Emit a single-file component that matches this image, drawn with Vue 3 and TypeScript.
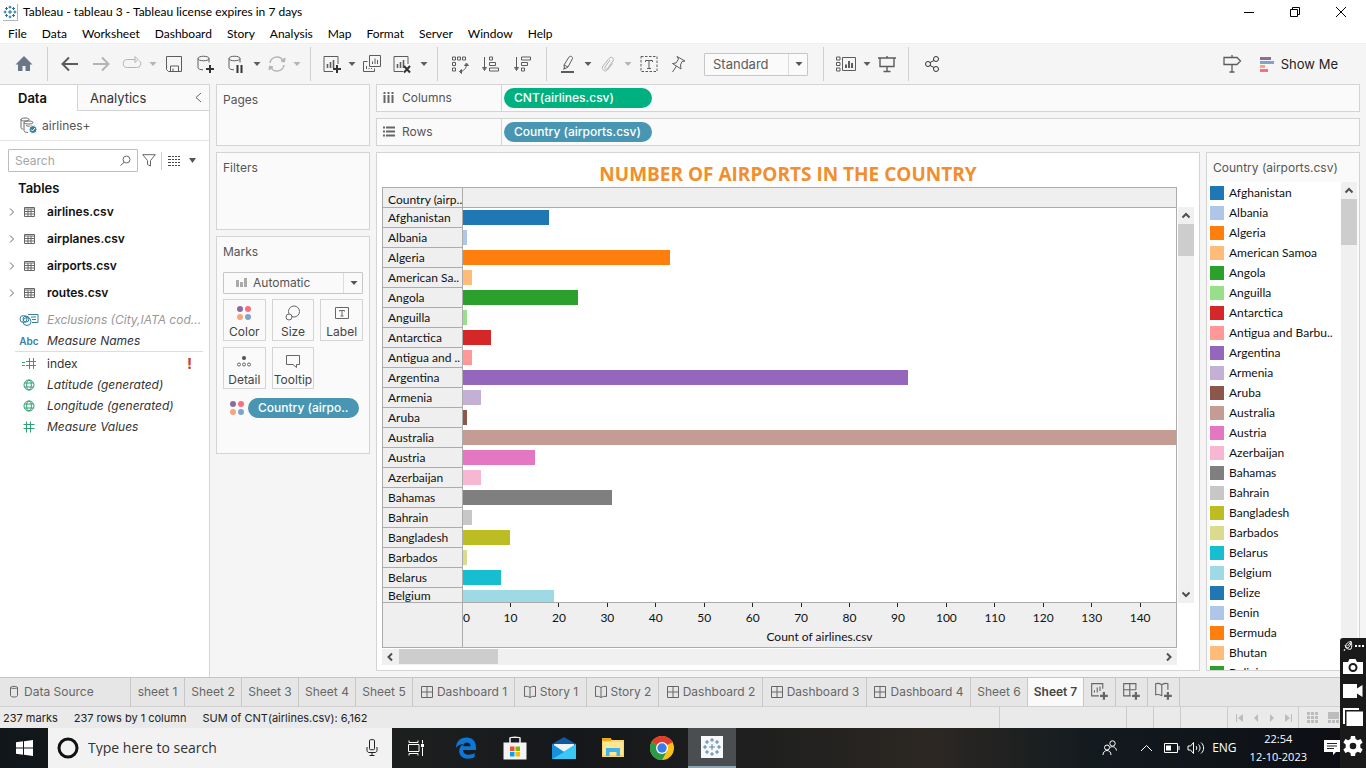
<script setup lang="ts">
import { ref } from 'vue'

interface Country { name: string; short?: string; value: number }
interface Tool { icon: string; label: string; size: string; dim?: boolean; sep?: boolean }

const palette = [
  '#1f77b4', '#aec7e8', '#ff7f0e', '#ffbb78', '#2ca02c', '#98df8a', '#d62728', '#ff9896', '#9467bd', '#c5b0d5',
  '#8c564b', '#c49c94', '#e377c2', '#f7b6d2', '#7f7f7f', '#c7c7c7', '#bcbd22', '#dbdb8d', '#17becf', '#9edae5',
]
const domain = 147.2

const countries: Country[] = [
  { name: 'Afghanistan', value: 18 },
  { name: 'Albania', value: 1 },
  { name: 'Algeria', value: 43 },
  { name: 'American Samoa', short: 'American Sa..', value: 2 },
  { name: 'Angola', value: 24 },
  { name: 'Anguilla', value: 1 },
  { name: 'Antarctica', value: 6 },
  { name: 'Antigua and Barbu..', short: 'Antigua and ..', value: 2 },
  { name: 'Argentina', value: 92 },
  { name: 'Armenia', value: 4 },
  { name: 'Aruba', value: 1 },
  { name: 'Australia', value: 191 },
  { name: 'Austria', value: 15 },
  { name: 'Azerbaijan', value: 4 },
  { name: 'Bahamas', value: 31 },
  { name: 'Bahrain', value: 2 },
  { name: 'Bangladesh', value: 10 },
  { name: 'Barbados', value: 1 },
  { name: 'Belarus', value: 8 },
  { name: 'Belgium', value: 19 },
]
const legend = [...countries.map((c) => c.name), 'Belize', 'Benin', 'Bermuda', 'Bhutan', 'Bolivia']
const ticks = Array.from({ length: 14 }, (_, i) => (i + 1) * 10)
const barWidth = (v: number) => `calc(${Math.min(101, (v / domain) * 100)}% - 1px)`

const menus = ['File', 'Data', 'Worksheet', 'Dashboard', 'Story', 'Analysis', 'Map', 'Format', 'Server', 'Window', 'Help']
const query = ref('')
const fit = ref('Standard')
const markType = ref('Automatic')

const db = '<path d="M3 4.5c0-3 11-3 11 0s-11 3-11 0v9c0 1.500 2 2.200 5 2.300M14 4.500v4"/>'
const sheet = '<path d="M16 10V2.500H2v15h9"/><path d="M5.500 14v-4M8.500 14V8M11.500 14V6" stroke-width="1.600"/>'
const plus = '<path d="M15 11v8M11 15h8" stroke="#333" stroke-width="2"/>'
const icons: Record<string, string> = {
  home: '<path d="M10 2L1.500 10.500H4V17h4.500v-5h3v5H16v-6.500h2.500z" fill="#6b7786" stroke="none"/>',
  back: '<path d="M18 10H3M9 3.500L2.500 10L9 16.500" stroke-width="2"/>',
  forward: '<path d="M2 10h15M11 3.500l6.500 6.500L11 16.500" stroke-width="2"/>',
  redo: '<path d="M13 5.500H5.500a4 3.800 0 0 0 0 8h9a4 3.800 0 0 0 2.500-7M13 2.500v6l3-3z"/>',
  save: '<path d="M2.500 2.500h15v15h-13l-2-2zM6.500 17.500v-5.500h8v5.500M9 14.500v3" />',
  dbAdd: db + plus,
  dbPause: db + '<path d="M11.500 11v8M15.500 11v8" stroke="#333" stroke-width="2"/>',
  refresh: '<path d="M3 9a7 7 0 0 1 13-2.500M17 11a7 7 0 0 1-13 2.500" stroke-width="1.500"/><path d="M17.500 8l.5-4-4 3zM2.500 12L2 16l4-3z" fill="currentColor"/>',
  newSheet: sheet + plus,
  duplicate: '<path d="M7.500 1.500h11v11h-11zM5.500 7.500h-4v10h11v-3"/><path d="M10.500 10V7.500M13 10V4.500M15.500 10V6M4.500 15v-3M7 15v-1M9.500 15v-1"/>',
  clear: sheet + '<path d="M12 12l6 6.500M18 12l-6 6.500" stroke="#333" stroke-width="2"/>',
  swap: '<path d="M2.500 3h3v3h-3zM7.500 3h3v3h-3zM12.500 3h3v3h-3zM2.500 8.500h3v3h-3zM2.500 14h3v3h-3zM9.500 17.500c4 0 7-3 7-7.500M9.500 17.500l2-2v4zM16.500 9l-2 2.500h4z"/>',
  asc: '<path d="M3.500 3v13M1.500 13.500l2 3 2-3zM8.500 3h3v3h-3zM8.500 8.500h6v3h-6zM8.500 14h9v3h-9z"/>',
  desc: '<path d="M3.500 3v13M1.500 13.500l2 3 2-3zM8.500 3h9v3h-9zM8.500 8.500h6v3h-6zM8.500 14h3v3h-3z"/>',
  highlight: '<path d="M6 11l5-8c1-1.500 4-.5 3.500 1.500L10 13l-3.500 2zM6 11l4 2M5.500 15.500l1-2"/><path d="M3 18h13" stroke-width="2"/>',
  clip: '<path d="M12 6l-5 7c-1 2 1 3 2.500 1.500L15 7c1.500-3-1.500-5-4-2.500L5 12c-2 3.500 1.500 6.500 4.500 4l5-6.500"/>',
  text: '<path d="M2 2.500h16v15H2z" stroke-dasharray="2.500 1.500"/><path d="M6.500 8V6.500h7V8M10 6.500v8M8 14.500h4"/>',
  pin: '<path d="M9 2.500l8 4.500-3 .500-1.500 3.500.5 4-8.500-5.500 3.500-.5 2.500-4zM8.500 12l-4 6"/>',
  cards: '<path d="M.5 3h3.500v3H.5zM.5 8.500h3.500v3H.5zM.5 14h3.500v3H.5zM6.500 3.500h13v13h-13z"/><path d="M10 14v-3.500M13 14V7M16 14V9" stroke-width="2"/>',
  present: '<path d="M1 4h18M3 4v8.500h14V4M10 2v2M10 12.500v5M6.500 17.500h7" stroke-width="1.400"/>',
  share: '<circle cx="6" cy="10" r="2.500"/><circle cx="14" cy="5" r="2.500"/><circle cx="14" cy="15" r="2.500"/><path d="M8 8.500l4-2M8 11.500l4 2"/>',
  guide: '<path d="M2 3.500h13l3.500 3.500-3.500 3.500H2zM10 1v2.500M10 10.500V18M7.500 18h5" stroke-width="1.300"/>',
  caret: '<path d="M6.500 8h7L10 12z" fill="currentColor" stroke="none"/>',
  grid: '<path d="M4.500 4.500h11v11h-11zM10 4.500v11M4.500 10h11"/>',
  book: '<path d="M4.500 4.500c2-.5 4 0 5.500 1 1.500-1 3.500-1.500 5.500-1v10c-2-.5-4 0-5.500 1-1.500-1-3.500-1.500-5.500-1zM10 5.500v10"/>',
  cylinder: '<path d="M6.500 5.500c0-1.500 7-1.500 7 0v8c0 2-7 2-7 0zM6.500 5.500c0 1.200 7 1.200 7 0"/>',
  tabSheet: '<path d="M14.500 9V4.500h-10v11H11M7 12.500v-2M9.500 12.500V8M12 11V7"/><path d="M15.500 12v7M12 15.500h7" stroke-width="2"/>',
  tabGrid: '<path d="M15.500 10V4.500h-11v11H11M10 4.500v11M4.500 10h11"/><path d="M15.500 12v7M12 15.500h7" stroke-width="2"/>',
  tabBook: '<path d="M10 5.500c1.500-1 3.500-1.500 5.500-1V10M10 15.500c-1.500-1-3.500-1.500-5.500-1v-10c2-.5 4 0 5.500 1v10"/><path d="M15.500 12v7M12 15.500h7" stroke-width="2"/>',
}

const tools: Tool[] = [
  { icon: 'home', label: 'Start page', size: 'w32', sep: true },
  { icon: 'back', label: 'Undo', size: 'w30' },
  { icon: 'forward', label: 'Redo', size: 'w32', dim: true },
  { icon: 'redo', label: 'Replay', size: 'w30', dim: true },
  { icon: 'caret', label: 'Replay options', size: 'w12', dim: true },
  { icon: 'save', label: 'Save', size: 'w30' },
  { icon: 'dbAdd', label: 'New data source', size: 'w32' },
  { icon: 'dbPause', label: 'Pause updates', size: 'w30' },
  { icon: 'caret', label: 'Pause options', size: 'w12' },
  { icon: 'refresh', label: 'Run update', size: 'w28', dim: true },
  { icon: 'caret', label: 'Update options', size: 'w12', dim: true, sep: true },
  { icon: 'newSheet', label: 'New worksheet', size: 'w28' },
  { icon: 'caret', label: 'New options', size: 'w12' },
  { icon: 'duplicate', label: 'Duplicate', size: 'w28' },
  { icon: 'clear', label: 'Clear sheet', size: 'w32' },
  { icon: 'caret', label: 'Clear options', size: 'w12', sep: true },
  { icon: 'swap', label: 'Swap rows and columns', size: 'w30' },
  { icon: 'asc', label: 'Sort ascending', size: 'w32' },
  { icon: 'desc', label: 'Sort descending', size: 'w32', sep: true },
  { icon: 'highlight', label: 'Highlight', size: 'w28' },
  { icon: 'caret', label: 'Highlight options', size: 'w12' },
  { icon: 'clip', label: 'Group members', size: 'w28', dim: true },
  { icon: 'caret', label: 'Group options', size: 'w12', dim: true },
  { icon: 'text', label: 'Show mark labels', size: 'w30' },
  { icon: 'pin', label: 'Fix axes', size: 'w28' },
]

const tables = ['airlines.csv', 'airplanes.csv', 'airports.csv', 'routes.csv']

const sheets = [
  { name: 'sheet 1', kind: 'sheet first' },
  { name: 'Sheet 2', kind: 'sheet' },
  { name: 'Sheet 3', kind: 'sheet' },
  { name: 'Sheet 4', kind: 'sheet' },
  { name: 'Sheet 5', kind: 'sheet' },
  { name: 'Dashboard 1', kind: 'dash narrow', icon: 'grid' },
  { name: 'Story 1', kind: 'story', icon: 'book' },
  { name: 'Story 2', kind: 'story', icon: 'book' },
  { name: 'Dashboard 2', kind: 'dash', icon: 'grid' },
  { name: 'Dashboard 3', kind: 'dash', icon: 'grid' },
  { name: 'Dashboard 4', kind: 'dash', icon: 'grid' },
  { name: 'Sheet 6', kind: 'sheet' },
  { name: 'Sheet 7', kind: 'sheet active' },
]
const crosses = [[10, 3], [15, 5], [17, 10], [15, 15], [10, 17], [5, 15], [3, 10], [5, 5]]
const cross = (x: number, y: number, r: number) => `M${x - r} ${y}h${2 * r}M${x} ${y - r}v${2 * r}`
const logo = cross(10, 10, 3) + crosses.map(([x, y]) => cross(x, y, 2)).join('')
</script>

<template>
  <div class="desktop">
    <header class="titlebar">
      <svg class="app-logo" viewBox="0 0 20 20"><path :d="logo" /></svg>
      <h1>Tableau - tableau 3 - Tableau license expires in 7 days</h1>
      <div class="win-buttons">
        <button aria-label="Minimize"><svg width="12" height="12"><path d="M1 6.500h10" /></svg></button>
        <button aria-label="Restore"><svg width="12" height="12"><path d="M1.500 3.500h7v7h-7zM3.500 3.500v-2h7v7h-2" /></svg></button>
        <button aria-label="Close"><svg width="12" height="12"><path d="M1 1l10 10M11 1L1 11" /></svg></button>
      </div>
    </header>
    <nav class="menubar">
      <button v-for="m in menus" :key="m">{{ m }}</button>
    </nav>

    <div class="toolbar">
      <template v-for="t in tools" :key="t.label">
        <button :class="[t.size, { dim: t.dim }]" :aria-label="t.label">
          <svg class="ico" viewBox="0 0 20 20" v-html="icons[t.icon]"></svg>
        </button>
        <span v-if="t.sep" class="sep"></span>
      </template>
      <label class="combo fit">
        <select v-model="fit" aria-label="Fit"><option>Standard</option><option>Fit Width</option></select>
        <span class="arrow"><svg class="ico" viewBox="0 0 20 20" v-html="icons.caret"></svg></span>
      </label>
      <span class="sep"></span>
      <button class="w30" aria-label="Show cards"><svg class="ico" viewBox="0 0 20 20" v-html="icons.cards"></svg></button>
      <button class="w12" aria-label="Card options"><svg class="ico" viewBox="0 0 20 20" v-html="icons.caret"></svg></button>
      <button class="w28" aria-label="Presentation mode"><svg class="ico" viewBox="0 0 20 20" v-html="icons.present"></svg></button>
      <span class="sep"></span>
      <button class="w32" aria-label="Share"><svg class="ico strong" viewBox="0 0 20 20" v-html="icons.share"></svg></button>
      <span class="grow"></span>
      <button class="w32" aria-label="Guide"><svg class="ico" viewBox="0 0 20 20" v-html="icons.guide"></svg></button>
      <button class="show-me">
        <svg width="14" height="15" viewBox="0 0 14 15"><path d="M0 0h11v3H0z" fill="#8c6d98" /><path d="M0 4h14v3H0z" fill="#7fa3cd" /><path d="M0 8h5v3H0z" fill="#f5a77a" /><path d="M0 12h8v3H0z" fill="#fc6d80" /></svg>
        Show Me
      </button>
    </div>

    <main class="workspace">
      <aside class="data-pane">
        <div class="pane-tabs" role="tablist">
          <button role="tab" aria-selected="true" class="on">Data</button>
          <button role="tab" aria-selected="false">Analytics</button>
          <button class="collapse" aria-label="Collapse"><svg width="7" height="11"><path d="M6 1L1 5.500L6 10" /></svg></button>
        </div>
        <div class="source">
          <svg width="17" height="17" viewBox="0 0 17 17">
            <path d="M1 2.500c0-2 8-2 8 0s-8 2-8 0v8c0 1 1 1.500 2 1.700M4 5.500c0-2 9-2 9 0s-9 2-9 0v8c0 1.500 2 2 4 2M6 8.500c1 .8 4 1 6 .3" />
            <circle cx="13" cy="12.500" r="4" class="badge" /><path d="M11 12.500l1.500 1.500 2.500-3" class="check" />
          </svg>
          airlines+
        </div>
        <div class="search-row">
          <label class="search">
            <input v-model="query" type="text" placeholder="Search" aria-label="Search fields" />
            <svg width="11" height="11"><circle cx="6.500" cy="4.500" r="3.500" /><path d="M4 7.500L.5 10.500" /></svg>
          </label>
          <button aria-label="Filter fields"><svg width="14" height="13"><path d="M.7.700h12.600L8.500 6.500v5.500l-3-1.500v-4z" /></svg></button>
          <span class="vline"></span>
          <button class="list" aria-label="View"><svg width="12" height="10"><path d="M0 .5h3M4 .5h2M7 .5h2M10 .5h2M0 3.500h3M4 3.500h2M7 3.500h2M10 3.500h2M0 6.500h3M4 6.500h2M7 6.500h2M10 6.500h2M0 9.500h3M4 9.500h2M7 9.500h2M10 9.500h2" class="dark" /></svg></button>
          <button class="more" aria-label="More"><svg width="7" height="5"><path d="M0 0h7L3.500 5z" class="solid" /></svg></button>
        </div>
        <h2>Tables</h2>
        <ul class="tables">
          <li v-for="t in tables" :key="t">
            <svg class="chev" width="6" height="8"><path d="M1 .5L4.500 4L1 7.500" /></svg>
            <svg class="tbl" width="11" height="10"><path d="M.5.5h10v9H.5zM.5 2h10M.5 4.500h10M.5 7h10M4 2v7.500M7 2v7.500" /></svg>
            {{ t }}
          </li>
        </ul>
        <ul class="fields">
          <li class="off">
            <svg width="20" height="14" class="blue"><circle cx="4.500" cy="6" r="3.500" /><circle cx="8" cy="8.500" r="4" /><circle cx="7" cy="6" r="3" /><path d="M9 1.500h10v8h-6M12 4h5M13 6.500h4" /></svg>
            <i>Exclusions (City,IATA cod...</i>
          </li>
          <li><b class="abc">Abc</b><i>Measure Names</i></li>
        </ul>
        <ul class="fields measures">
          <li>
            <svg width="14" height="11" class="green"><path d="M0 4.500h3M0 7.500h3M4 3.500h10M4 7.500h10M7.500 0v11M11.500 0v11" /></svg>
            <span>index</span><b class="warn">!</b>
          </li>
          <li v-for="g in ['Latitude (generated)', 'Longitude (generated)']" :key="g">
            <svg width="12" height="12" class="green"><circle cx="6" cy="6" r="5" /><ellipse cx="6" cy="6" rx="2.300" ry="5" /><path d="M1.500 4h9M1.500 8h9" /></svg>
            <i>{{ g }}</i>
          </li>
          <li>
            <svg width="12" height="12" class="green"><path d="M.5 3.500h11M.5 7.500h11M3.500 .5v11M7.500 .5v11" /></svg>
            <i>Measure Values</i>
          </li>
        </ul>
      </aside>

      <div class="cards">
        <section class="card pages"><h3>Pages</h3></section>
        <section class="card filters"><h3>Filters</h3></section>
        <section class="card marks">
          <h3>Marks</h3>
          <label class="combo mark-type">
            <svg width="11" height="10" class="bars"><path d="M1.500 2v7M5.500 4v5M9.500 0v9" /></svg>
            <select v-model="markType" aria-label="Mark type"><option>Automatic</option><option>Bar</option></select>
            <span class="arrow"><svg class="ico" viewBox="0 0 20 20" v-html="icons.caret"></svg></span>
          </label>
          <div class="mark-grid">
            <button>
              <svg width="16" height="16" class="dots"><circle cx="4" cy="4" r="3" fill="#8c6d98" /><circle cx="12" cy="4" r="3" fill="#fc6d80" /><circle cx="4" cy="12" r="3" fill="#f5a77a" /><circle cx="12" cy="12" r="3" fill="#7fa3cd" /></svg>Color
            </button>
            <button><svg width="16" height="16"><circle cx="9" cy="6.500" r="5.500" /><circle cx="4" cy="12" r="3" class="cover" /></svg>Size</button>
            <button><svg width="16" height="16"><path d="M1.500 2.500h13v11h-13zM5.500 6.500v-1h5v1M8 5.500v5.500M6.500 11h3" /></svg>Label</button>
            <button><svg width="16" height="16"><circle cx="8" cy="5" r="1.700" class="fill" /><circle cx="3" cy="11.500" r="1.500" /><circle cx="8" cy="11.500" r="1.500" /><circle cx="13" cy="11.500" r="1.500" /></svg>Detail</button>
            <button><svg width="16" height="16"><path d="M1.500 2.500h13v9h-3v3l-3.500-3H1.500z" /></svg>Tooltip</button>
          </div>
          <div class="mark-pill">
            <svg width="16" height="16"><circle cx="4" cy="4" r="3" fill="#8c6d98" /><circle cx="12" cy="4" r="3" fill="#fc6d80" /><circle cx="4" cy="12" r="3" fill="#f5a77a" /><circle cx="12" cy="12" r="3" fill="#7fa3cd" /></svg>
            <button class="pill dim-pill">Country (airpo..</button>
          </div>
        </section>
      </div>

      <div class="canvas">
        <section class="shelf">
          <h3><svg width="12" height="12"><path d="M1.500 0v2M5.500 0v2M9.500 0v2M1.500 3v8M5.500 3v8M9.500 3v8" /></svg>Columns</h3>
          <button class="pill measure">CNT(airlines.csv)</button>
        </section>
        <section class="shelf">
          <h3><svg width="12" height="12"><path d="M0 1.500h2M0 5.500h2M0 9.500h2M3 1.500h9M3 5.500h9M3 9.500h9" /></svg>Rows</h3>
          <button class="pill dim-pill">Country (airports.csv)</button>
        </section>
        <div class="view-row">
          <section class="worksheet">
            <h2>NUMBER OF AIRPORTS IN THE COUNTRY</h2>
            <div class="viz">
              <div class="pane">
                <div class="row head"><span class="name">Country (airp..</span></div>
                <ul class="rows">
                  <li v-for="(c, i) in countries" :key="c.name" class="row">
                    <span class="name">{{ c.short || c.name }}</span>
                    <span class="track"><span class="bar" :style="{ width: barWidth(c.value), background: palette[i] }"></span></span>
                  </li>
                </ul>
                <div class="axis">
                  <span class="corner"></span>
                  <div class="scale">
                    <div class="ticks">
                      <span class="zero">0</span>
                      <span v-for="t in ticks" :key="t" class="tick">{{ t }}</span>
                      <span class="rest"></span>
                    </div>
                    <p>Count of airlines.csv</p>
                  </div>
                </div>
              </div>
              <div class="scroll v">
                <svg width="16" height="17"><path d="M4.500 10.500L8 7l3.500 3.500" /></svg>
                <span class="thumb"></span><span class="grow"></span>
                <svg width="16" height="17"><path d="M4.500 6.500L8 10l3.500-3.500" /></svg>
              </div>
            </div>
            <div class="scroll h">
              <svg width="17" height="16"><path d="M10 4.500L6.500 8L10 11.500" /></svg>
              <span class="thumb"></span><span class="grow"></span>
              <svg width="17" height="16"><path d="M7 4.500L10.500 8L7 11.500" /></svg>
            </div>
          </section>
          <section class="legend">
            <h3>Country (airports.csv)</h3>
            <div class="legend-body">
              <ul>
                <li v-for="(n, i) in legend" :key="n">
                  <span class="swatch" :style="{ background: palette[i % palette.length] }"></span>{{ n }}
                </li>
              </ul>
              <div class="scroll v">
                <svg width="16" height="17"><path d="M4.500 10.500L8 7l3.500 3.500" /></svg>
                <span class="thumb"></span>
              </div>
            </div>
          </section>
        </div>
      </div>
    </main>

    <nav class="sheet-tabs">
      <button class="ds"><svg class="ico" viewBox="0 0 20 20" v-html="icons.cylinder"></svg>Data Source</button>
      <button v-for="s in sheets" :key="s.name" :class="s.kind">
        <svg v-if="s.icon" class="tab-ico" viewBox="3 3 14 14" v-html="icons[s.icon]"></svg>{{ s.name }}
      </button>
      <button class="add" aria-label="New worksheet"><svg class="ico" viewBox="3 3 18 18" v-html="icons.tabSheet"></svg></button>
      <button class="add" aria-label="New dashboard"><svg class="ico" viewBox="3 3 18 18" v-html="icons.tabGrid"></svg></button>
      <button class="add" aria-label="New story"><svg class="ico" viewBox="3 3 18 18" v-html="icons.tabBook"></svg></button>
    </nav>

    <footer class="status">
      <span>237 marks</span><span>237 rows by 1 column</span><span>SUM of CNT(airlines.csv): 6,162</span>
      <span class="grow"></span>
      <span class="cell wide"></span><span class="cell"></span><span class="cell"></span><span class="cell mid"></span>
      <span class="cell nav">
        <button aria-label="First"><svg width="8" height="8"><path d="M0 0h1v8H0zM7 0v8L2 4z" /></svg></button>
        <button aria-label="Previous"><svg width="8" height="8"><path d="M6 0v8L2 4z" /></svg></button>
        <button aria-label="Next"><svg width="8" height="8"><path d="M2 0v8l4-4z" /></svg></button>
        <button aria-label="Last"><svg width="8" height="8"><path d="M7 0h1v8H7zM1 0v8l5-4z" /></svg></button>
      </span>
      <span class="cell views">
        <button aria-label="Show sheet sorter"><svg width="11" height="11"><path d="M0 0h3v3H0zM4 0h3v3H4zM8 0h3v3H8zM0 4h3v3H0zM4 4h3v3H4zM8 4h3v3H8zM0 8h3v3H0zM4 8h3v3H4zM8 8h3v3H8z" /></svg></button>
        <button aria-label="Show filmstrip"><svg width="11" height="11"><path d="M0 0h11v7H0zM0 8h3v3H0zM4 8h3v3H4zM8 8h3v3H8z" /></svg></button>
      </span>
    </footer>

    <div class="taskbar">
      <button class="start" aria-label="Start">
        <svg width="17" height="16"><path d="M0 2.300L7 1.300V7.500H0zM8 1.200L17 0v7.500H8zM0 8.500h7v6.200l-7-1zM8 8.500h9V16l-9-1.200z" fill="#fff" /></svg>
      </button>
      <label class="cortana">
        <svg width="22" height="22"><circle cx="11" cy="11" r="9" fill="none" stroke="#111" stroke-width="3" /></svg>
        <input type="text" placeholder="Type here to search" aria-label="Windows search" />
        <svg width="12" height="18" class="mic"><rect x="3.500" y=".7" width="5" height="10" rx="1" /><path d="M1 8v3.500c0 1 1 2 2 2h6c1 0 2-1 2-2V8M6 13.500V17M3.500 16.500h5" /></svg>
      </label>
      <button class="app" aria-label="Task view">
        <svg width="17" height="16" class="line"><path d="M1 .5v2h9v-2M.5 4.500h10.500v7H.5zM1 15.500v-2h9v2M14.500 0v3.500M14.500 7.500V16" /><path d="M13 4h3v3h-3z" fill="#fff" stroke="none" /></svg>
      </button>
      <button class="app" aria-label="Edge">
        <svg width="22" height="22" viewBox="0 0 22 22"><path d="M1 11C1 4.500 5.500.500 11.500.500c6 0 9.500 4 9.500 9.500v3H8c.2 3.500 3 4.700 6 4.700 2.300 0 4.300-.7 5.700-1.600v4c-2 1.100-4.400 1.600-7 1.600-5 0-8.500-3-8.500-7.700 0-3.200 1.800-5.700 4.600-7C5.500 7 2.500 8.500 1 11zM8.200 9.300h7.300c0-2.600-1.300-3.800-3.500-3.800S8.500 7 8.200 9.300z" fill="#0b78d7" /></svg>
      </button>
      <button class="app" aria-label="Store">
        <svg width="24" height="24"><path d="M7 8V2c0-1 10-1 10 0v6" fill="none" stroke="#f3f3f3" stroke-width="1.500" /><path d="M.5 6.500h23v17H.5z" fill="#f3f3f3" /><path d="M7 10.500h4.500V15H7z" fill="#f25022" /><path d="M12.500 10.500H17V15h-4.500z" fill="#7fba00" /><path d="M7 16h4.500v4.500H7z" fill="#00a4ef" /><path d="M12.500 16H17v4.500h-4.500z" fill="#ffb900" /></svg>
      </button>
      <button class="app" aria-label="Mail">
        <svg width="24" height="22"><path d="M0 7L12 0l12 7v15H0z" fill="#0c59a4" /><path d="M2 7h20v9H2z" fill="#f2f2f2" /><path d="M0 7l12 8L24 7v15H0z" fill="#2cb5ed" /><path d="M0 22L24 7v15z" fill="#38c8f5" /><path d="M0 7l12 8L0 22z" fill="#1591df" /></svg>
      </button>
      <button class="app" aria-label="File explorer">
        <svg width="22" height="20"><path d="M0 1h9l1 1h12v17H0z" fill="#f6d672" /><path d="M0 0h9v3H0z" fill="#e8ab21" /><path d="M1 4h20v13H1z" fill="#fde694" /><path d="M4 18v-8h14v8h-3.500v-4h-7v4z" fill="#3fb3ea" /></svg>
      </button>
      <button class="app" aria-label="Chrome">
        <svg width="24" height="24"><circle cx="12" cy="12" r="12" fill="#fbc116" /><path d="M12 12L1.600 6A12 12 0 0 1 22.400 6z" fill="#e33b2e" /><path d="M1.600 6A12 12 0 0 0 12 24l5.200-9z" fill="#2c9b48" /><path d="M12 6h10.400" stroke="#e33b2e" stroke-width="1" /><circle cx="12" cy="12" r="6" fill="#fff" /><circle cx="12" cy="12" r="4.700" fill="#3a7cec" /></svg>
      </button>
      <button class="app current" aria-label="Tableau">
        <svg width="22" height="22" viewBox="0 0 22 22"><path d="M0 0h22v22H0z" fill="#f8f8f8" /><path :d="logo" transform="translate(1 1)" stroke="#4f86a8" fill="none" /></svg>
      </button>
      <span class="grow"></span>
      <div class="tray">
        <button aria-label="People"><svg width="16" height="16" class="line"><circle cx="10.500" cy="3.500" r="2.700" /><circle cx="5" cy="7.500" r="2.500" /><path d="M7.500 8c2-2.500 6.500-1.500 7 2.500M1 15c0-6 8-6 8 0" /></svg></button>
        <button class="up" aria-label="Hidden icons"><svg width="13" height="8" class="line"><path d="M1 7l5.500-5.500L12 7" /></svg></button>
        <button aria-label="Battery"><svg width="16" height="10" class="line"><path d="M.5.5h13v9H.5zM15 3v4" /><path d="M2 2.500h5v5H2z" fill="#fff" stroke="none" /></svg></button>
        <button aria-label="Volume"><svg width="18" height="14" class="line"><path d="M1 5h2.500l3-3.500v11L3.500 9H1zM9 5c1 1 1 3 0 4M11.500 3.500c2 2 2 5 0 7M14 1.500c3.500 3 3.500 8 0 11" /></svg></button>
        <button class="lang">ENG</button>
        <button class="clock"><span>22:54</span><span>12-10-2023</span></button>
        <button class="note" aria-label="Notifications"><svg width="18" height="18"><path d="M0 1h16v12h-4l-3 3v-3H0z" fill="#fff" /><path d="M3 4.500h10M3 7h10M3 9.500h7" stroke="#222" /></svg></button>
      </div>
    </div>

    <div class="recorder">
      <svg width="22" height="12"><path d="M3 9l-1 2M4 8c-1-3 1-6 5-6.500C9 5 7 8.500 4 8zM3 5c1 3 3 5 6 4 1-2 1-5 0-7.500M5.500 6L8 3" class="outline" /><path d="M13 5h2v2h-2zM16.500 5h2v2h-2zM20 5h2v2h-2z" /></svg>
      <button aria-label="Screenshot"><svg width="20" height="16"><path d="M0 4h5l1.500-3h6L14 4h6v12H0z" /><circle cx="10" cy="9.500" r="3.500" class="ring" /></svg></button>
      <button aria-label="Record video"><svg width="20" height="14"><path d="M0 0h14v4.500L19.500 1v12L14 9.500V14H0z" /></svg></button>
      <button aria-label="Windows"><svg width="20" height="18"><path d="M0 0h16v2H2v14H0z" /><path d="M3.500 3.500H20V18H3.500z" /></svg></button>
      <button aria-label="Settings"><svg width="20" height="20" viewBox="0 0 20 20"><path d="M8 0h4l.6 3 2.200 1.200L17.600 3l2 3.500-2.300 2v3l2.300 2-2 3.500-2.800-1.200L12.600 17l-.6 3H8l-.6-3-2.200-1.200L2.400 17l-2-3.500 2.300-2v-3l-2.300-2 2-3.500 2.800 1.200L7.400 3z" /><circle cx="10" cy="10" r="3.300" class="hole" /></svg></button>
    </div>
  </div>
</template>

<style>
body { overflow: hidden; }
</style>

<style scoped>
* { box-sizing: border-box; }
.desktop {
  --ui: Inter, "Liberation Sans", sans-serif;
  --sys: Lato, "Open Sans", sans-serif;
  --wide: "Open Sans", "Noto Sans", sans-serif;
  --line: #d4d4d4;
  position: relative; display: flex; flex-direction: column; height: 100vh; min-height: 600px;
  font: 12px/16px var(--ui); color: #333; background: #f5f5f5; overflow: hidden;
}
h1, h2, h3, p, ul { margin: 0; padding: 0; font-weight: 400; font-size: 12px; }
ul { list-style: none; }
button, input, select { font: inherit; color: inherit; border: 0; background: none; padding: 0; margin: 0; }
svg { flex: none; display: block; fill: none; stroke: #666; }
.grow { flex: 1; }
.ico { width: 20px; height: 20px; stroke: currentColor; }

.titlebar { display: flex; align-items: center; height: 24px; background: #fff; padding: 0 2px 0 3px; font-family: var(--sys); color: #000; }
.app-logo { width: 15px; height: 17px; border: solid #b5b5b5; border-width: 0 1px 1px 0; stroke: #1f6f9a; stroke-width: 1.500; }
.titlebar h1 { margin-left: 5px; flex: 1; font-size: 12px; }
.win-buttons { display: flex; }
.win-buttons button { width: 46px; height: 20px; display: grid; place-items: center; }
.win-buttons svg { stroke: #000; }
.menubar { display: flex; gap: 15px; height: 19px; padding-left: 8px; background: #fff; font-family: var(--sys); color: #000; }

.toolbar { display: flex; align-items: center; height: 41px; border-top: 1px solid #efefef; color: #5c5c5c; padding: 0 28px 0 8px; }
.toolbar button { display: flex; justify-content: center; align-items: center; height: 28px; }
.toolbar .dim { color: #b4b4b4; }
.toolbar .strong { color: #333; }
.w32 { width: 32px; }
.w30 { width: 30px; }
.w28 { width: 28px; }
.w12 { width: 12px; }
.sep { width: 1px; height: 34px; margin: 0 7px; background: #cfcfcf; }
.combo { display: flex; align-items: center; border: 1px solid #c6c6c6; border-radius: 1px; background: #fafafa; }
.combo select { flex: 1; min-width: 0; appearance: none; outline: 0; }
.arrow { display: grid; place-items: center; width: 19px; align-self: stretch; border-left: 1px solid #ddd; color: #555; overflow: hidden; pointer-events: none; }
.fit { width: 104px; height: 23px; margin: 0 8px 0 12px; font-size: 13px; }
.fit select { padding-left: 8px; }
.show-me { gap: 7px; margin-left: 12px; font-size: 13px; color: #222; }
.show-me svg { stroke: none; }

.workspace { flex: 1; min-height: 0; display: flex; gap: 6px; padding-right: 6px; }
.data-pane { width: 210px; background: #fff; border: solid var(--line); border-width: 1px 1px 0 0; color: #333; }
.pane-tabs { display: flex; height: 26px; font-size: 13px; }
.pane-tabs button { border-bottom: 1px solid var(--line); background: #fafafa; padding: 0 12px; flex: 1; text-align: left; }
.pane-tabs .on { flex: none; width: 78px; padding: 0 18px; border-bottom: 0; border-right: 1px solid var(--line); background: #fff; font-weight: 600; color: #111; }
.pane-tabs .collapse { flex: none; padding: 0 7px; }
.source { display: flex; align-items: center; gap: 5px; height: 30px; padding-left: 20px; border-bottom: 1px solid #e4e4e4; color: #555; }
.badge { fill: #35809d; stroke: #fff; }
.check { stroke: #fff; }
.search-row { display: flex; align-items: center; margin: 8px 0 0 8px; }
.search { display: flex; align-items: center; width: 130px; height: 23px; border: 1px solid #bdbdbd; border-radius: 1px; padding: 0 6px; }
.search input { flex: 1; min-width: 0; outline: 0; }
.search input::placeholder { color: #a5a5a5; }
.search-row button { margin-left: 4px; }
.vline { width: 1px; height: 18px; margin-left: 5px; background: #ccc; }
.search-row .list { margin-left: 6px; }
.search-row .more { margin-left: 9px; }
.dark { stroke: #444; }
.solid { fill: #555; stroke: none; }
.data-pane h2 { margin: 8px 0 2px 18px; font-size: 13px; font-weight: 600; color: #111; }
.tables li { display: flex; align-items: center; height: 27px; padding-left: 9px; font-weight: 600; color: #111; }
.tbl { margin: 0 12px 0 9px; }
.fields { padding: 3px 0 0 15px; margin-right: 6px; }
.fields li { display: grid; grid-template-columns: 28px 1fr auto; column-gap: 4px; align-items: center; height: 21px; white-space: nowrap; }
.fields li > :first-child { justify-self: center; }
.fields .off { color: #999; }
.fields .abc { font-size: 10px; color: #35809d; font-weight: 600; }
.blue { stroke: #35809d; }
.green { stroke: #2f9f74; }
.measures { margin-left: 15px; padding: 1px 0 0; border-top: 1px solid #ddd; }
.warn { color: #c8402f; font-size: 15px; padding-right: 11px; }

.cards { width: 154px; display: flex; flex-direction: column; gap: 6px; }
.card { border: 1px solid var(--line); background: #fafafa; padding: 7px 6px; color: #555; }
.pages { min-height: 62px; }
.filters { min-height: 78px; }
.marks { min-height: 218px; }
.mark-type { height: 22px; margin-top: 12px; padding-left: 12px; gap: 6px; }
.bars { stroke: #aaa; stroke-width: 3; }
.mark-grid { display: grid; grid-template-columns: repeat(3, 1fr); gap: 6px; margin-top: 5px; }
.mark-grid button { display: flex; flex-direction: column; align-items: center; justify-content: space-between; height: 42px; padding: 5px 0 0; border: 1px solid var(--line); color: #444; }
.dots, .mark-pill svg { stroke: none; }
.cover { fill: #fafafa; }
.fill { fill: #555; }
.mark-pill { display: flex; align-items: center; gap: 3px; margin: 9px 4px 0 6px; }
.pill { height: 20px; border-radius: 10px; padding: 0 10px; text-align: left; color: #fff; font-weight: 500; white-space: nowrap; }
.mark-pill .pill { flex: 1; }
.dim-pill { background: #4996b2; }
.measure { background: #00b180; }

.canvas { flex: 1; min-width: 0; display: flex; flex-direction: column; gap: 6px; padding-bottom: 6px; }
.shelf { display: flex; align-items: center; height: 28px; border: 1px solid var(--line); background: #fafafa; }
.shelf h3 { display: flex; align-items: center; gap: 7px; width: 125px; height: 26px; padding-left: 6px; border-right: 1px solid var(--line); color: #555; }
.shelf h3 svg { stroke-width: 2; }
.shelf .pill { width: 148px; margin-left: 2px; }
.view-row { flex: 1; min-height: 0; display: flex; gap: 6px; }
.worksheet { flex: 1; min-width: 0; display: flex; flex-direction: column; padding: 0 5px 5px; border: 1px solid var(--line); background: #fff; font-family: var(--sys); color: #111; }
.worksheet h2 { height: 34px; padding-top: 7px; text-align: center; font: 700 19px/28px var(--wide); color: #f28e2b; }
.viz { flex: 1; min-height: 0; display: flex; }
.pane { flex: 1; min-width: 0; display: flex; flex-direction: column; border: 1px solid #acacac; background: #efefef; }
.row { display: flex; flex: none; height: 20px; }
.head { border-bottom: 1px solid #acacac; }
.head .name { border-bottom: 0; padding-top: 2px; }
.name { width: 80px; padding-left: 5px; border: solid #acacac; border-width: 0 1px 1px 0; line-height: 19px; white-space: nowrap; overflow: hidden; }
.rows { flex: 1; min-height: 0; display: flex; flex-direction: column; overflow: hidden; }
.rows .row:last-child { flex: 0 1 20px; min-height: 0; overflow: hidden; }
.rows .row:last-child .name { border-bottom: 0; line-height: 15px; }
.track { flex: 1; background: #fff; padding-top: 2px; overflow: hidden; }
.bar { display: block; height: 15px; }
.axis { display: flex; border-top: 1px solid #acacac; }
.corner { width: 80px; border-right: 1px solid #acacac; }
.scale { flex: 1; min-width: 0; height: 44px; text-align: center; }
.ticks { display: flex; height: 24px; }
.zero { flex: 48 1 0; text-align: left; padding-top: 7px; }
.tick { flex: 100 1 0; min-width: 0; }
.tick::before { content: ""; display: block; width: 1px; height: 4px; margin: 0 auto 3px; background: #222; }
.rest { flex: 24 1 0; }
.scale p { line-height: 20px; }
.scroll { display: flex; background: #f0f0f0; }
.scroll svg { stroke: #505050; stroke-width: 2; }
.scroll .thumb { background: #cdcdcd; }
.scroll.v { flex-direction: column; width: 16px; }
.viz .v { margin: 20px 0 45px 1px; }
.viz .thumb { height: 32px; }
.scroll.h { height: 16px; margin: 1px 17px 0 0; }
.h .thumb { width: 99px; height: 15px; }
.legend { width: 154px; display: flex; flex-direction: column; border: 1px solid var(--line); background: #fafafa; color: #555; }
.legend h3 { height: 29px; padding: 7px 6px; }
.legend-body { flex: 1; min-height: 0; display: flex; overflow: hidden; padding: 0 2px; background: #fafafa; }
.legend ul { flex: 1; min-width: 0; padding: 1px; background: #fff; font-family: var(--sys); color: #111; }
.legend li { display: flex; align-items: center; gap: 5px; height: 20px; white-space: nowrap; }
.swatch { width: 14px; height: 14px; }
.legend .thumb { height: 46px; }

.sheet-tabs { display: flex; height: 30px; border-top: 1px solid #c4c4c4; border-bottom: 1px solid #d0d0d0; background: #e6e6e6; font-size: 12px; color: #666; }
.sheet-tabs button { flex: none; display: flex; align-items: center; justify-content: center; width: 57px; border-right: 1px solid #c6c6c6; white-space: nowrap; }
.tab-ico { width: 14px; height: 14px; margin-right: 3px; }
.sheet-tabs .ds { width: 131px; justify-content: flex-start; padding-left: 4px; }
.sheet-tabs .first { width: 54px; }
.sheet-tabs .dash { width: 104px; }
.sheet-tabs .narrow { width: 102px; }
.sheet-tabs .story { width: 72px; }
.sheet-tabs .active { width: 56px; background: #fafafa; font-weight: 600; color: #444; }
.sheet-tabs .add { width: 32px; }
.status { display: flex; align-items: center; gap: 16px; height: 21px; padding-left: 3px; background: #eaeaea; color: #222; font-size: 11px; }
.cell { align-self: stretch; width: 27px; margin-left: -16px; border-left: 1px solid #ccc; display: flex; align-items: center; }
.cell.wide { width: 127px; }
.cell.mid { width: 47px; }
.cell.nav { width: 71px; padding-left: 8px; gap: 8px; }
.cell.views { width: 68px; padding-left: 8px; gap: 10px; }
.status svg { fill: #bcbcbc; stroke: none; }

.taskbar { display: flex; align-items: stretch; height: 40px; font-family: var(--wide); color: #fff; background: linear-gradient(90deg, #101619 0, #1d1f1f 30%, #15171a 42%, #1e1f1e 55%, #2c2723 68%, #131b1f 80%, #0c0d13 100%); }
.taskbar button { display: grid; place-items: center; }
.taskbar svg { stroke: none; }
.start { width: 48px; }
.cortana { display: flex; align-items: center; width: 344px; padding: 0 14px 0 9px; background: #f2f2f2; }
.cortana input { flex: 1; min-width: 0; margin-left: 9px; font-size: 14px; color: #222; outline: 0; }
.cortana input::placeholder { color: #333; opacity: 1; }
.taskbar .mic { stroke: #222; }
.taskbar .line { stroke: #fff; }
.app { width: 49px; }
.taskbar .current { width: 48px; margin-left: 2px; background: #4b4e50; border-bottom: 2px solid #8da5b3; }
.tray { display: flex; align-items: center; gap: 7px; padding-right: 24px; }
.up { margin: 0 4px 0 15px; }
.clock { font-size: 11px; line-height: 18px; margin-left: 6px; }
.note { margin-left: 10px; }

.recorder { position: absolute; right: 0; bottom: 0; width: 26px; height: 130px; display: flex; flex-direction: column; align-items: center; gap: 10px; padding-top: 2px; border-radius: 3px 0 0 0; background: #1a1a1a; }
.recorder svg { fill: #fff; stroke: none; }
.recorder > svg { margin-bottom: -4px; }
.recorder .outline { fill: none; stroke: #fff; }
.recorder .ring { stroke: #1a1a1a; stroke-width: 2; }
.recorder .hole { fill: #1a1a1a; }
</style>
